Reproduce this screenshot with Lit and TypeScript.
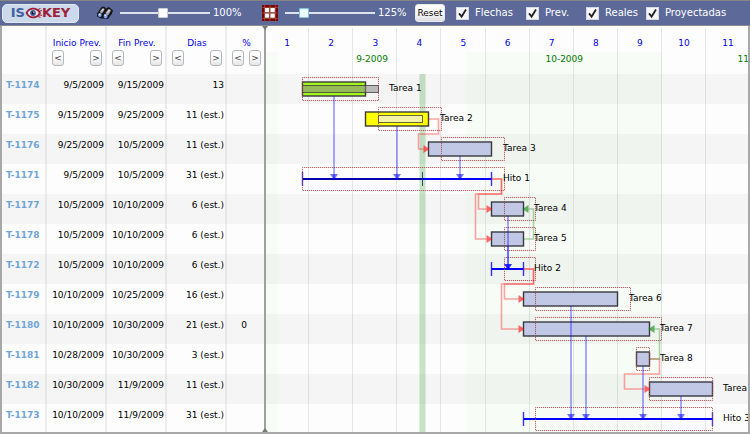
import { LitElement, html, svg, css } from "lit";
import { customElement, state } from "lit/decorators.js";

type Kind = "done" | "active" | "planned" | "milestone";

interface Task {
  id: string;
  start: string;
  end: string;
  days: string;
  percent: string;
  name: string;
  kind: Kind;
  from: number;
  to: number;
  projFrom: number;
  projTo: number;
  realFrom?: number;
  realTo?: number;
  labelAt: number;
}

interface Link {
  from: number;
  to: number;
  back?: number;
}

const DAY = 6.3;
const ROW = 30;
const HEAD = 48;
const WEEKS = 11;

/* Day numbers count from 30 August 2009, the first day of week 1. */
const x = (day: number) => day * DAY - 1;
const edge = (day: number) => Math.floor(x(day)) + 0.5;
const top = (row: number) => HEAD + row * ROW;

const TASKS: Task[] = [
  { id: "T-1174", start: "9/5/2009", end: "9/15/2009", days: "13", percent: "", name: "Tarea 1", kind: "done", from: 6, to: 16, projFrom: 6, projTo: 18, realFrom: 6, realTo: 18, labelAt: 123 },
  { id: "T-1175", start: "9/15/2009", end: "9/25/2009", days: "11 (est.)", percent: "", name: "Tarea 2", kind: "active", from: 16, to: 26, projFrom: 18, projTo: 28, realFrom: 18, realTo: 25, labelAt: 174 },
  { id: "T-1176", start: "9/25/2009", end: "10/5/2009", days: "11 (est.)", percent: "", name: "Tarea 3", kind: "planned", from: 26, to: 36, projFrom: 28, projTo: 38, labelAt: 237 },
  { id: "T-1171", start: "9/5/2009", end: "10/5/2009", days: "31 (est.)", percent: "", name: "Hito 1", kind: "milestone", from: 6, to: 36, projFrom: 6, projTo: 38, realFrom: 6, realTo: 25, labelAt: 237 },
  { id: "T-1177", start: "10/5/2009", end: "10/10/2009", days: "6 (est.)", percent: "", name: "Tarea 4", kind: "planned", from: 36, to: 41, projFrom: 38, projTo: 43, labelAt: 268 },
  { id: "T-1178", start: "10/5/2009", end: "10/10/2009", days: "6 (est.)", percent: "", name: "Tarea 5", kind: "planned", from: 36, to: 41, projFrom: 38, projTo: 43, labelAt: 268 },
  { id: "T-1172", start: "10/5/2009", end: "10/10/2009", days: "6 (est.)", percent: "", name: "Hito 2", kind: "milestone", from: 36, to: 41, projFrom: 38, projTo: 43, labelAt: 268 },
  { id: "T-1179", start: "10/10/2009", end: "10/25/2009", days: "16 (est.)", percent: "", name: "Tarea 6", kind: "planned", from: 41, to: 56, projFrom: 43, projTo: 58, labelAt: 363 },
  { id: "T-1180", start: "10/10/2009", end: "10/30/2009", days: "21 (est.)", percent: "0", name: "Tarea 7", kind: "planned", from: 41, to: 61, projFrom: 43, projTo: 63, labelAt: 394 },
  { id: "T-1181", start: "10/28/2009", end: "10/30/2009", days: "3 (est.)", percent: "", name: "Tarea 8", kind: "planned", from: 59, to: 61, projFrom: 59, projTo: 61, labelAt: 394 },
  { id: "T-1182", start: "10/30/2009", end: "11/9/2009", days: "11 (est.)", percent: "", name: "Tarea 9", kind: "planned", from: 61, to: 71, projFrom: 61, projTo: 71, labelAt: 457 },
  { id: "T-1173", start: "10/10/2009", end: "11/9/2009", days: "31 (est.)", percent: "", name: "Hito 3", kind: "milestone", from: 41, to: 71, projFrom: 43, projTo: 71, labelAt: 457 },
];

/* Finish-to-start links, with the distance each one runs back before its target. */
const STARTS: Link[] = [
  { from: 1, to: 2, back: 10 },
  { from: 3, to: 4, back: 13 },
  { from: 3, to: 5, back: 16 },
  { from: 6, to: 7, back: 19 },
  { from: 6, to: 8, back: 22 },
  { from: 9, to: 10, back: 25 },
];
const FINISHES: Link[] = [{ from: 5, to: 4 }, { from: 9, to: 8 }];
const PARENTS: Link[] = [
  { from: 0, to: 3 }, { from: 1, to: 3 }, { from: 2, to: 3 },
  { from: 4, to: 6 }, { from: 5, to: 6 },
  { from: 7, to: 11 }, { from: 8, to: 11 }, { from: 9, to: 11 }, { from: 10, to: 11 },
];
const MONTHS = [
  { name: "", from: -1, to: 2, tint: true },
  { name: "9-2009", from: 2, to: 32, tint: false },
  { name: "10-2009", from: 32, to: 63, tint: true },
  { name: "11-2009", from: 63, to: 93, tint: false },
];
const COLUMNS = ["Inicio Prev.", "Fin Prev.", "Dias", "%"];
const FILTERS = ["Flechas", "Prev.", "Reales", "Proyectadas"];

@customElement("gantt-chart")
export class GanttChart extends LitElement {
  static styles = css`
    :host { display: block; min-width: 0; overflow: hidden; background: #fdfdfd; }
    svg { display: block; width: 100%; }
    text { font: 9px "DejaVu Sans", Verdana, sans-serif; fill: #000; }
    .week { fill: #0000e6; text-anchor: middle; }
    .month { fill: #007a00; text-anchor: middle; }
    .stripe { fill: #f5f5f5; }
    .tint { fill: #20e820; fill-opacity: 0.027; }
    .grid { fill: #000; fill-opacity: 0.09; }
    .today { fill: #008000; fill-opacity: 0.11; }
    .bar { stroke: #3a3a3f; stroke-width: 1.4; }
    .done { fill: #a6f51e; }
    .active { fill: #ffff00; }
    .planned { fill: #c0c8e6; }
    .real { stroke: #333; stroke-opacity: 0.75; }
    .real-done { fill: #888; fill-opacity: 0.55; }
    .real-active { fill: #f0f0f0; fill-opacity: 0.7; }
    .projected { fill: none; stroke: #a84444; stroke-dasharray: 1 1; stroke-dashoffset: 0.7; }
    .span { stroke: #0000ff; stroke-width: 2; }
    .span-real { stroke: #0000b0; stroke-width: 2; }
    .cap { stroke: #0000ff; stroke-opacity: 0.8; stroke-width: 1.4; }
    .cap-real { stroke: #003060; stroke-opacity: 0.8; }
    .start { fill: none; stroke: #ff0000; stroke-opacity: 0.35; stroke-width: 1.6; }
    .start-head { fill: #ff0000; fill-opacity: 0.6; }
    .finish { fill: none; stroke: #008000; stroke-opacity: 0.32; stroke-width: 1.6; }
    .finish-head { fill: #008000; fill-opacity: 0.6; }
    .parent { stroke: #0000ff; stroke-opacity: 0.33; stroke-width: 2; }
    .parent-head { fill: #0000ff; fill-opacity: 0.55; }
  `;

  private task(t: Task, row: number) {
    const y = top(row);
    const a = edge(t.from);
    const b = edge(t.to);
    const mid = y + 15;
    const real = t.realFrom !== undefined && t.realTo !== undefined;
    const ra = edge(t.realFrom ?? 0);
    const rb = edge(t.realTo ?? 0);
    const pa = edge(t.projFrom);
    const pb = edge(t.projTo);
    return svg`
      ${t.kind === "milestone"
        ? svg`
          <line class="span" x1=${a} x2=${b} y1=${mid} y2=${mid} />
          ${real ? svg`<line class="span-real" x1=${ra} x2=${rb} y1=${mid} y2=${mid} />
            <line class="cap-real" x1=${rb} x2=${rb} y1=${y + 8} y2=${y + 22} />` : null}
          <line class="cap" x1=${a} x2=${a} y1=${y + 8} y2=${y + 22} />
          <line class="cap" x1=${b} x2=${b} y1=${y + 8} y2=${y + 22} />`
        : svg`
          <rect class="bar ${t.kind}" x=${a} y=${y + 8} width=${b - a} height="14" />
          ${real ? svg`<rect class="real real-${t.kind}" x=${ra} y=${y + 11.5} width=${rb - ra} height="7" />` : null}`}
      <path class="projected" d="M${pa} ${y + 3.5}H${pb}V${y + 26.5}H${pa}Z" />`;
  }

  private startLink(l: Link) {
    const a = edge(TASKS[l.from].to);
    const b = edge(TASKS[l.to].from);
    const y1 = top(l.from) + 15;
    const y2 = top(l.to) + 15;
    const turn = top(l.from + 1);
    return svg`
      <path class="start" d="M${a} ${y1}H${a + 10}V${turn}H${b - (l.back ?? 10)}V${y2}H${b - 5}" />
      <path class="start-head" d="M${b - 5} ${y2 - 4}L${b + 1} ${y2}L${b - 5} ${y2 + 4}Z" />`;
  }

  private finishLink(l: Link) {
    const a = edge(TASKS[l.from].to);
    const b = edge(TASKS[l.to].to);
    const y1 = top(l.from) + 15;
    const y2 = top(l.to) + 15;
    return svg`
      <path class="finish" d="M${a} ${y1}H${a + 10}V${y2}H${b + 5}" />
      <path class="finish-head" d="M${b + 5} ${y2 - 4}L${b - 1} ${y2}L${b + 5} ${y2 + 4}Z" />`;
  }

  private parentLink(l: Link) {
    const t = TASKS[l.from];
    const c = Math.round((x(t.from) + x(t.to)) / 2);
    const y = top(l.to) + 15;
    return svg`
      <line class="parent" x1=${c} x2=${c} y1=${top(l.from) + 22} y2=${y - 1} />
      <path class="parent-head" d="M${c - 4} ${y - 5}H${c + 4}L${c} ${y + 1}Z" />`;
  }

  render() {
    const height = top(TASKS.length);
    const weeks = Array.from({ length: WEEKS }, (_, i) => i + 1);
    return html`
      <svg height=${height} role="img" aria-label="Gantt">
        ${TASKS.map((_, i) => (i % 2 ? null : svg`<rect class="stripe" x="0" y=${top(i)} width="100%" height=${ROW} />`))}
        ${MONTHS.filter((m) => m.tint).map((m) => svg`
          <rect class="tint" x=${x(m.from)} y="26" width=${(m.to - m.from) * DAY} height=${height - 26} />`)}
        ${weeks.map((w) => svg`
          <rect class="grid" x=${Math.round(x(w * 7)) - 1} y="2" width="1" height=${height} />
          <text class="week" x=${x(w * 7 - 3.5)} y="20">${w}</text>`)}
        ${MONTHS.map((m) => m.name ? svg`<text class="month" x=${x((m.from + m.to) / 2)} y="36">${m.name}</text>` : null)}
        <rect class="today" x=${Math.round(x(25)) - 4} y=${HEAD} width="7" height=${height} />
        <rect class="today" x=${Math.round(x(25)) - 3} y=${HEAD} width="5" height=${height} />
        ${TASKS.map((t, i) => this.task(t, i))}
        ${PARENTS.map((l) => this.parentLink(l))}
        ${STARTS.map((l) => this.startLink(l))}
        ${FINISHES.map((l) => this.finishLink(l))}
        ${TASKS.map((t, i) => svg`<text x=${t.labelAt} y=${top(i) + 17}>${t.name}</text>`)}
      </svg>`;
  }
}

@customElement("task-table")
export class TaskTable extends LitElement {
  static styles = css`
    :host { display: block; overflow: hidden; background: #fdfdfd; }
    table { border-collapse: separate; border-spacing: 0; table-layout: fixed; width: 262px; font-size: 9px; line-height: 12px; }
    .c-id { width: 45px; }
    .c-data { width: 60px; }
    .c-pct { width: 37px; }
    th, td { box-sizing: border-box; padding: 0 1px 0 0; border-right: 2px solid #ececec; vertical-align: top; white-space: nowrap; }
    th:last-child, td:last-child { border-right: 0; padding-right: 3px; }
    thead th { height: 48px; padding: 11px 3px 0 5px; font-weight: 400; color: #0000e6; }
    thead th:last-child { padding: 11px 3px 0 5px; }
    .title { display: flex; justify-content: center; margin: 0 -4px; }
    .moves { display: flex; justify-content: space-between; margin-top: 1px; }
    button { box-sizing: border-box; width: 12px; height: 16px; padding: 0; border: 1px solid #b4b8bc; border-radius: 3px; background: linear-gradient(#fff, #fbfbfb 50%, #e6e6e8); font: 9px/12px "DejaVu Sans", Verdana, sans-serif; color: #444; }
    tbody th, tbody td { height: 30px; padding-top: 5px; text-align: right; }
    tbody tr:nth-child(odd) { background: #f5f5f5; }
    tbody tr:nth-child(odd) > * { border-color: #e6e6e6; }
    tbody th { padding-left: 4px; text-align: left; }
    a { color: #6fa5d8; font-weight: 700; text-decoration: none; }
    tbody td:last-child { text-align: center; }
  `;

  render() {
    return html`
      <table>
        <colgroup>
          <col class="c-id" /><col class="c-data" /><col class="c-data" /><col class="c-data" /><col class="c-pct" />
        </colgroup>
        <thead>
          <tr>
            <th></th>
            ${COLUMNS.map((c) => html`
              <th scope="col">
                <span class="title">${c}</span>
                <span class="moves">
                  <button type="button" aria-label="${c} anterior">&lt;</button>
                  <button type="button" aria-label="${c} siguiente">&gt;</button>
                </span>
              </th>`)}
          </tr>
        </thead>
        <tbody>
          ${TASKS.map((t) => html`
            <tr>
              <th scope="row"><a href="#${t.id}">${t.id}</a></th>
              <td>${t.start}</td>
              <td>${t.end}</td>
              <td>${t.days}</td>
              <td>${t.percent}</td>
            </tr>`)}
        </tbody>
      </table>`;
  }
}

@customElement("app-root")
export class AppRoot extends LitElement {
  static styles = css`
    :host { display: flex; flex-direction: column; height: 100vh; overflow: hidden; font-family: "DejaVu Sans", Verdana, sans-serif; }
    .toolbar { display: flex; flex: none; align-items: center; box-sizing: border-box; height: 26px; padding-left: 2px; border-top: 1px solid #858585; border-bottom: 1px solid #8c8c90; background: #5c6999; color: #fff; font-size: 10px; line-height: 12px; white-space: nowrap; }
    .logo { display: flex; align-items: center; justify-content: center; box-sizing: border-box; width: 77px; height: 19px; border: 1px solid #e2ebf5; border-radius: 5px; background: #cbd9ea; font-size: 13px; font-weight: 700; line-height: 16px; text-decoration: none; }
    .is { color: #41609f; }
    .key { color: #a01f3a; }
    .glass { margin: 0 7px 0 18px; }
    .frame { margin: 0 7px 0 20px; }
    svg { display: block; flex: none; }
    .zoom { appearance: none; width: 90px; height: 12px; margin: 0 3px 0 0; background: linear-gradient(#dde3ec, #dde3ec) center / 100% 2px no-repeat; }
    .zoom::-webkit-slider-thumb { appearance: none; width: 10px; height: 10px; border: 1px solid #c8ccd4; border-radius: 1px; background: #fff; }
    .scale::-webkit-slider-thumb { border-color: #7fc4da; background: #eefaff; }
    output { width: 29px; }
    .reset { box-sizing: border-box; width: 30px; height: 18px; margin: 0 11px 0 8px; padding: 0; border: 1px solid #e8eaee; border-radius: 3px; background: linear-gradient(#fff, #fafafa 50%, #dcdee2); color: #000; font: 9px/12px "DejaVu Sans", Verdana, sans-serif; }
    label { display: flex; align-items: center; gap: 6px; box-sizing: border-box; width: 60px; }
    label:first-of-type { width: 70px; }
    input[type="checkbox"] { appearance: none; box-sizing: border-box; flex: none; width: 13px; height: 13px; margin: 0; border: 1px solid #d4d8e0; background: #f6f6f8; }
    input[type="checkbox"]:checked { background: #f6f6f8 url("data:image/svg+xml,%3Csvg xmlns='http://www.w3.org/2000/svg' viewBox='0 0 11 11'%3E%3Cpath d='M2 5.4L4.6 8.6L9 1.6' fill='none' stroke='%23222' stroke-width='1.8'/%3E%3C/svg%3E") center / 11px 11px no-repeat; }
    .work { display: grid; flex: 1; grid-template-columns: 262px 2px minmax(0, 1fr); min-height: 0; overflow: hidden; border: solid #a8a8a8; border-width: 0 2px 2px; }
    .split { display: flex; flex-direction: column; justify-content: space-between; align-items: center; background: #a0a0a0; }
    .grip { position: relative; z-index: 1; }
  `;

  @state() private search = 104;
  @state() private scale = 125;

  render() {
    return html`
      <header class="toolbar">
        <a class="logo" href="#inicio" aria-label="ISOKEY">
          <span class="is">IS</span>
          <svg width="17" height="12" viewBox="0 0 17 12">
            <path d="M0.5 6C3 1.6 5.6 0.8 8.2 0.8S13.6 1.6 16 6C13.6 10.4 11 11.2 8.2 11.2S3 10.4 0.5 6Z" fill="#a01f3a" />
            <path d="M2.6 6C4 3.2 6 2.5 8 2.5S12.4 3.2 13.8 6C12.4 8.8 10 9.5 8 9.5S4 8.8 2.6 6Z" fill="#f3e6ea" />
            <circle cx="8" cy="6" r="2.9" fill="#41609f" />
            <circle cx="8" cy="6" r="1.4" fill="#101838" />
            <circle cx="8.8" cy="5.2" r="0.6" fill="#fff" />
            <path d="M12.5 2.6L15.5 1.6M14 4.2L17 3.6M14 7.8L17 8.4M12.5 9.4L15.5 10.4" stroke="#a01f3a" />
          </svg>
          <span class="key">KEY</span>
        </a>
        <svg class="glass" width="16" height="14" viewBox="0 0 16 14">
          <path d="M0 7.6L4.6 1L7 0.4L9 2.4L12 1L16 4.4L15 7.6L11 13L7 12.4L4 12.6L0 10.6Z" fill="#15151a" />
          <path d="M2.6 6L5.6 2.2L7.6 3.4L5 7.6ZM8.4 7L11.6 3L14 4.6L11 9.6Z" fill="#a9a9ae" />
          <path d="M4.4 5.4L6.6 2.6M10.4 6.4L12.8 3.6" stroke="#f2f2f2" />
          <ellipse cx="2.8" cy="9" rx="1.8" ry="2" fill="#7da4ff" />
          <ellipse cx="8.6" cy="10" rx="2" ry="2.2" fill="#7da4ff" />
          <path d="M2 8.4h1.4M7.6 9.4h1.4" stroke="#fff" />
        </svg>
        <input class="zoom" type="range" min="0" max="220" .value=${String(this.search)} aria-label="Zoom"
          @input=${(e: Event) => (this.search = Number((e.target as HTMLInputElement).value))} />
        <output>${this.search - 4}%</output>
        <svg class="frame" width="16" height="16" viewBox="0 0 16 16">
          <rect width="16" height="16" fill="#7a0400" />
          <path d="M0 2.5H16M0 13.5H16M2.5 0V16M13.5 0V16M8 0V16M0 8H16" stroke="#b07058" stroke-width="0.5" />
          <path d="M3 3H7.2V7.2H3ZM8.4 3H12.8V7.2H8.4ZM3 8.4H7.2V12.8H3ZM8.4 8.4H12.8V12.8H8.4Z" fill="#fff" />
        </svg>
        <input class="zoom scale" type="range" min="0" max="700" .value=${String(this.scale)} aria-label="Escala"
          @input=${(e: Event) => (this.scale = Number((e.target as HTMLInputElement).value))} />
        <output>${this.scale}%</output>
        <button class="reset" type="button">Reset</button>
        ${FILTERS.map((f) => html`<label><input type="checkbox" checked />${f}</label>`)}
      </header>
      <main class="work">
        <task-table></task-table>
        <div class="split">
          <svg class="grip" width="6" height="4" viewBox="0 0 6 4"><path d="M0 0H6L3 4Z" fill="#777" /></svg>
          <svg class="grip" width="6" height="4" viewBox="0 0 6 4"><path d="M0 4H6L3 0Z" fill="#777" /></svg>
        </div>
        <gantt-chart></gantt-chart>
      </main>`;
  }
}
